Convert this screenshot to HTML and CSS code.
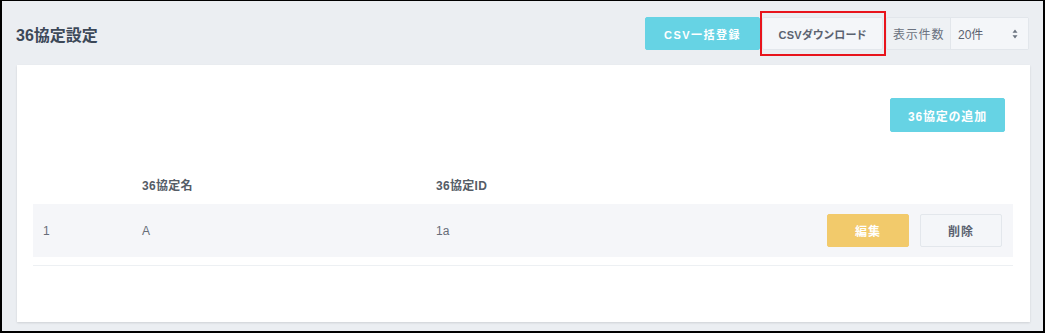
FILE: index.html
```html
<!DOCTYPE html>
<html lang="ja">
<head>
<meta charset="utf-8">
<link rel="stylesheet" href="styles.css">
</head>
<body>
<div class="frame">
  <header class="header">
    <h1 class="title">36協定設定</h1>
    <div class="tools">
      <button class="btn btn-cyan btn-wide">CSV一括登録</button>
      <div class="dl-wrap">
        <button class="btn btn-light btn-dl">CSVダウンロード</button>
        <span class="highlight"></span>
      </div>
      <div class="per-page">
        <span class="per-label">表示件数</span>
        <span class="per-select">20件<svg class="arrows" width="6" height="10" viewBox="0 0 6 10"><path d="M3 0.5 L5.5 3.8 H0.5 Z M3 9.5 L5.5 6.2 H0.5 Z" fill="#6b7480"/></svg></span>
      </div>
    </div>
  </header>
  <main class="card">
    <div class="card-actions">
      <button class="btn btn-cyan btn-add">36協定の追加</button>
    </div>
    <div class="table">
      <div class="row head">
        <div class="cell"></div>
        <div class="cell">36協定名</div>
        <div class="cell">36協定ID</div>
        <div class="cell"></div>
      </div>
      <div class="row body">
        <div class="cell">1</div>
        <div class="cell">A</div>
        <div class="cell">1a</div>
        <div class="cell actions">
          <button class="btn btn-yellow btn-sm">編集</button>
          <button class="btn btn-light btn-sm">削除</button>
        </div>
      </div>
      <div class="sep"></div>
    </div>
  </main>
</div>
</body>
</html>
```
FILE: styles.css
```css
* { box-sizing: border-box; }
html, body { margin: 0; padding: 0; }
body {
  font-family: "Liberation Sans", "Noto Sans CJK JP", sans-serif;
  background: #000;
}
.frame {
  width: 1045px;
  height: 333px;
  border-style: solid;
  border-color: #000;
  border-width: 1px 2px 2px 2px;
  background: #ebeef2;
  display: flex;
  flex-direction: column;
  overflow: hidden;
}
.header {
  display: flex;
  align-items: center;
  justify-content: space-between;
  padding: 16px 14px 0 14px;
  height: 49px;
}
.title {
  margin: 0;
  font-size: 16px;
  font-weight: 700;
  color: #3c4858;
}
.tools {
  display: flex;
  align-items: center;
  gap: 2px;
}
.btn {
  font-family: inherit;
  font-size: 12px;
  font-weight: 700;
  border-radius: 2px;
  border: 1px solid transparent;
  cursor: pointer;
  padding: 0;
  height: 33px;
}
.btn-cyan {
  background: #66d3e4;
  border-color: #66d3e4;
  color: #fff;
}
.btn-light {
  background: #f4f6f9;
  border-color: #e3e7ec;
  color: #5b6270;
}
.btn-yellow {
  background: #f2ca6b;
  border-color: #f2ca6b;
  color: #fff;
}
.btn-wide { width: 115px; font-size: 11px; letter-spacing: 1.5px; }
.dl-wrap { position: relative; }
.btn-dl { width: 121px; font-size: 11px; font-feature-settings: "palt"; letter-spacing: 0.3px; }
.highlight {
  position: absolute;
  left: -2px;
  top: -6px;
  width: 126px;
  height: 45px;
  border: 2px solid #e8141c;
  pointer-events: none;
}
.per-page {
  display: flex;
  align-items: stretch;
  height: 33px;
  width: 143px;
  margin-left: 1px;
  border: 1px solid #e2e6eb;
  border-radius: 2px;
  background: #eef1f4;
  font-size: 12px;
  color: #6b7280;
}
.per-label {
  display: flex;
  align-items: center;
  padding-left: 6px;
  width: 63px;
  letter-spacing: 0.8px;
}
.per-select {
  flex: 1;
  display: flex;
  align-items: center;
  justify-content: space-between;
  padding: 0 10px 0 7px;
  background: #f4f6f9;
  border-left: 1px solid #e2e6eb;
  color: #5b6270;
}
.card {
  margin: 15px 13px 0 15px;
  height: 257px;
  background: #fff;
  box-shadow: 0 1px 2px rgba(0,0,0,0.12);
  padding: 33px 17px 0 16px;
}
.card-actions {
  display: flex;
  justify-content: flex-end;
  padding-right: 8px;
}
.btn-add { width: 115px; height: 34px; letter-spacing: 0.8px; }
.table { margin-top: 32px; }
.row {
  display: grid;
  grid-template-columns: 99px 294px 1fr auto;
  align-items: center;
  font-size: 12px;
}
.row.head {
  height: 40px;
  font-weight: 700;
  color: #555c66;
  letter-spacing: 0.3px;
}
.row.body {
  height: 53px;
  background: #f5f6f9;
  color: #676d78;
}
.cell { padding-left: 10px; }
.actions {
  display: flex;
  gap: 11px;
  padding-right: 11px;
}
.btn-sm { width: 82px; height: 33px; letter-spacing: 1px; }
.sep {
  margin-top: 8px;
  height: 1px;
  background: #edf0f3;
}
```
